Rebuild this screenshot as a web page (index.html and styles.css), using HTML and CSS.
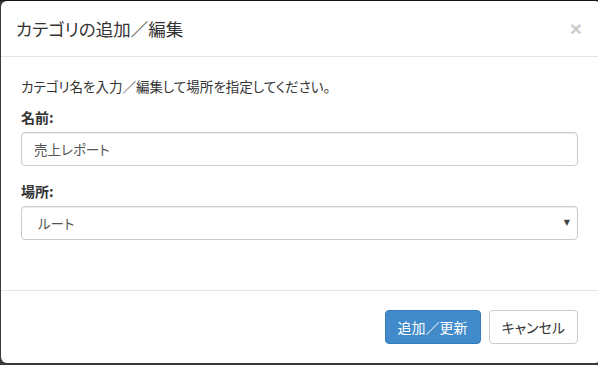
FILE: index.html
```html
<!DOCTYPE html>
<html lang="ja">
<head>
<meta charset="utf-8">
<link rel="stylesheet" href="styles.css">
</head>
<body>
<div class="modal">
  <div class="modal-header">
    <h4 class="modal-title">カテゴリの追加／編集</h4>
    <span class="close">×</span>
  </div>
  <div class="modal-body">
    <p class="lead-text">カテゴリ名を入力／編集して場所を指定してください。</p>
    <div class="form-group">
      <label class="form-label">名前:</label>
      <div class="form-control">売上レポート</div>
    </div>
    <div class="form-group">
      <label class="form-label">場所:</label>
      <div class="form-control select">
        <span class="select-value">ルート</span>
        <span class="caret">▼</span>
      </div>
    </div>
  </div>
  <div class="modal-footer">
    <button class="btn btn-primary">追加／更新</button>
    <button class="btn btn-default">キャンセル</button>
  </div>
</div>
</body>
</html>
```

FILE: styles.css
```css
* { box-sizing: border-box; }
html, body { margin: 0; padding: 0; }
body {
  background: #3a3a3a;
  border-top: 1px solid #151515;
  height: 365px;
  overflow: hidden;
  font-family: "Noto Sans CJK JP", "Noto Sans", sans-serif;
  font-feature-settings: "palt";
  color: #333;
  font-size: 14px;
  line-height: 20px;
}
.modal {
  margin-left: 1px;
  width: 600px;
  background: #fff;
  border-radius: 6px;
}
.modal-header {
  padding: 15px 16px 15px 15px;
  border-bottom: 1px solid #e5e5e5;
  display: flex;
  align-items: center;
  justify-content: space-between;
}
.modal-title {
  margin: 0;
  font-size: 17.5px;
  font-weight: normal;
  line-height: 25px;
  color: #333;
}
.close {
  font-family: "Liberation Sans", sans-serif;
  font-size: 21px;
  font-weight: bold;
  color: #000;
  opacity: 0.2;
  line-height: 1;
  margin-right: 3px;
}
.modal-body {
  padding: 19px 23px 35px 20px;
}
.lead-text {
  margin: 0 0 11px;
  font-size: 13.5px;
}
.form-group { margin-bottom: 15px; }
.form-label {
  display: block;
  font-weight: bold;
  margin-bottom: 5px;
}
.form-control {
  height: 34px;
  padding: 6px 12px;
  border: 1px solid #ccc;
  border-radius: 4px;
  color: #555;
  font-size: 13.5px;
  line-height: 20px;
  box-shadow: inset 0 1px 1px rgba(0,0,0,.075);
}
.select {
  display: flex;
  justify-content: space-between;
  align-items: center;
  padding-left: 16px;
  padding-right: 7px;
}
.caret {
  font-size: 8px;
  color: #444;
  font-family: "DejaVu Sans", sans-serif;
}
.modal-footer {
  border-top: 1px solid #e5e5e5;
  padding: 19px 23px 19px 20px;
  display: flex;
  justify-content: flex-end;
  gap: 8px;
}
.btn {
  height: 34px;
  padding: 6px 12px;
  font-family: inherit;
  font-feature-settings: "palt";
  font-size: 14px;
  line-height: 20px;
  border-radius: 4px;
  border: 1px solid transparent;
}
.btn-primary {
  background: #428bca;
  border-color: #357ebd;
  color: #fff;
}
.btn-default {
  background: #fff;
  border-color: #ccc;
  color: #333;
}
```
